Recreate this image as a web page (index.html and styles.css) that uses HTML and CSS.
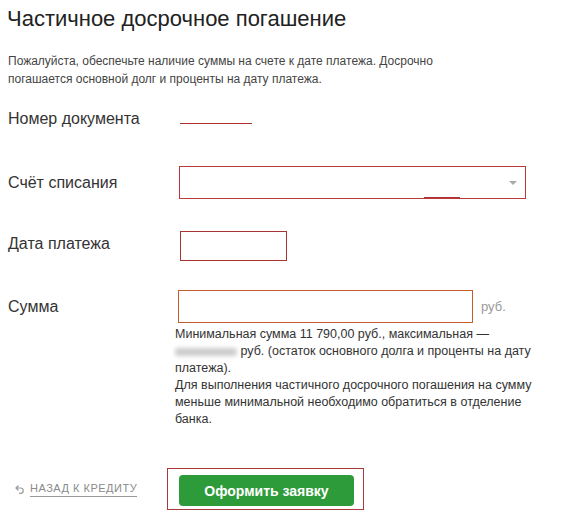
FILE: index.html
```html
<!DOCTYPE html>
<html lang="ru">
<head>
  <meta charset="UTF-8" />
  <meta name="viewport" content="width=device-width, initial-scale=1.0" />
  <title>Частичное досрочное погашение</title>
  <link rel="stylesheet" href="styles.css">
</head>
<body>
  <div class="page">
    <h1>Частичное досрочное погашение</h1>
    <p class="note">Пожалуйста, обеспечьте наличие суммы на счете к дате платежа. Досрочно погашается основной долг и проценты на дату платежа.</p>

    <div class="row row-doc">
      <div class="label">Номер документа</div>
      <div class="field">
        <span class="doc-line"></span>
      </div>
    </div>

    <div class="row row-account">
      <div class="label">Счёт списания</div>
      <div class="field">
        <div class="select">
          <span class="select-mark"></span>
          <span class="select-arrow"></span>
        </div>
      </div>
    </div>

    <div class="row row-date">
      <div class="label">Дата платежа</div>
      <div class="field">
        <input class="input input-date" type="text" />
      </div>
    </div>

    <div class="row row-sum">
      <div class="label">Сумма</div>
      <div class="field">
        <div class="sum-line">
          <input class="input input-sum" type="text" />
          <span class="currency">руб.</span>
        </div>
      </div>
    </div>
    <div class="hint">
      Минимальная сумма 11 790,00 руб., максимальная —<br>
      <span class="blurred"></span> руб. (остаток основного долга и проценты на дату платежа).<br>
      Для выполнения частичного досрочного погашения на сумму меньше минимальной необходимо обратиться в отделение банка.
    </div>

    <div class="actions">
      <a class="back" href="#">
        <svg width="10" height="11" viewBox="0 0 10 11">
          <path d="M4.5 1.5 L2 4 L4.5 6.5 M2 4 H6.5 A2.7 2.7 0 0 1 6.5 9.4 H5" fill="none" stroke="#999" stroke-width="1.2"/>
        </svg>
        <span>Назад к кредиту</span>
      </a>
      <div class="submit-wrap">
        <button class="submit">Оформить заявку</button>
      </div>
    </div>
  </div>
</body>
</html>
```

FILE: styles.css
```css
body {
  margin: 0;
  background: #fff;
  font-family: "Liberation Sans", Arial, sans-serif;
  color: #333;
}
.page {
  width: 571px;
  padding: 6px 0 0 8px;
  box-sizing: border-box;
}
h1 {
  margin: 0 0 0 -1px;
  font-size: 22px;
  line-height: 26px;
  font-weight: normal;
  color: #222;
}
.note {
  margin: 20px 0 0;
  width: 440px;
  font-size: 12px;
  line-height: 18px;
  color: #444;
}
.row {
  display: flex;
  align-items: center;
}
.label {
  width: 170px;
  font-size: 16px;
  color: #333;
}
.field {
  flex: 1;
}
.row-doc {
  height: 32px;
  margin-top: 15px;
}
.row-doc .field {
  height: 32px;
}
.doc-line {
  display: block;
  width: 72px;
  height: 1px;
  margin: 20px 0 0 2px;
  background: #b03030;
}
.row-account {
  margin-top: 31px;
}
.select {
  position: relative;
  width: 345px;
  height: 31px;
  margin-left: 1px;
  border: 1px solid #b83a3a;
  background: #fff;
}
.select-mark {
  position: absolute;
  left: 244px;
  bottom: 0;
  width: 36px;
  height: 1px;
  background: #b03030;
}
.select-arrow {
  position: absolute;
  right: 8px;
  top: 14px;
  border-left: 4px solid transparent;
  border-right: 4px solid transparent;
  border-top: 4px solid #aaa;
}
.row-date {
  margin-top: 32px;
}
.row-date .label {
  margin-top: -5px;
}
.input {
  display: block;
  box-sizing: border-box;
  margin: 0;
  padding: 0 6px;
  background: #fff;
  font: 13px "Liberation Sans", Arial, sans-serif;
  outline: none;
}
.input-date {
  width: 107px;
  height: 30px;
  margin-left: 2px;
  border: 1px solid #a83434;
}
.row-sum {
  margin-top: 29px;
}
.sum-line {
  display: flex;
  align-items: center;
  gap: 8px;
}
.input-sum {
  width: 295px;
  height: 33px;
  border: 1px solid #c45d2a;
}
.currency {
  font-size: 13px;
  color: #999;
}
.hint {
  margin: 3px 0 0 167px;
  width: 375px;
  font-size: 12.5px;
  line-height: 17px;
  color: #333;
}
.blurred {
  display: inline-block;
  width: 62px;
  height: 8px;
  vertical-align: middle;
  background: #ccc;
  border-radius: 3px;
  filter: blur(2px);
}
.actions {
  display: flex;
  align-items: center;
  margin-top: 40px;
  padding-left: 6px;
}
.back {
  display: flex;
  align-items: center;
  gap: 6px;
  width: 153px;
  color: #8a8a8a;
  text-decoration: none;
  font-size: 11px;
  text-transform: uppercase;
  letter-spacing: 0.5px;
}
.back span {
  border-bottom: 1px solid #999;
  padding-bottom: 2px;
}
.submit-wrap {
  padding: 6px 9px 3px 11px;
  border: 1px solid #a83a3a;
}
.submit {
  display: block;
  width: 175px;
  height: 31px;
  border: none;
  border-radius: 4px;
  background: #2e9b3a;
  color: #fff;
  font: bold 14px "Liberation Sans", Arial, sans-serif;
  cursor: pointer;
}
```
